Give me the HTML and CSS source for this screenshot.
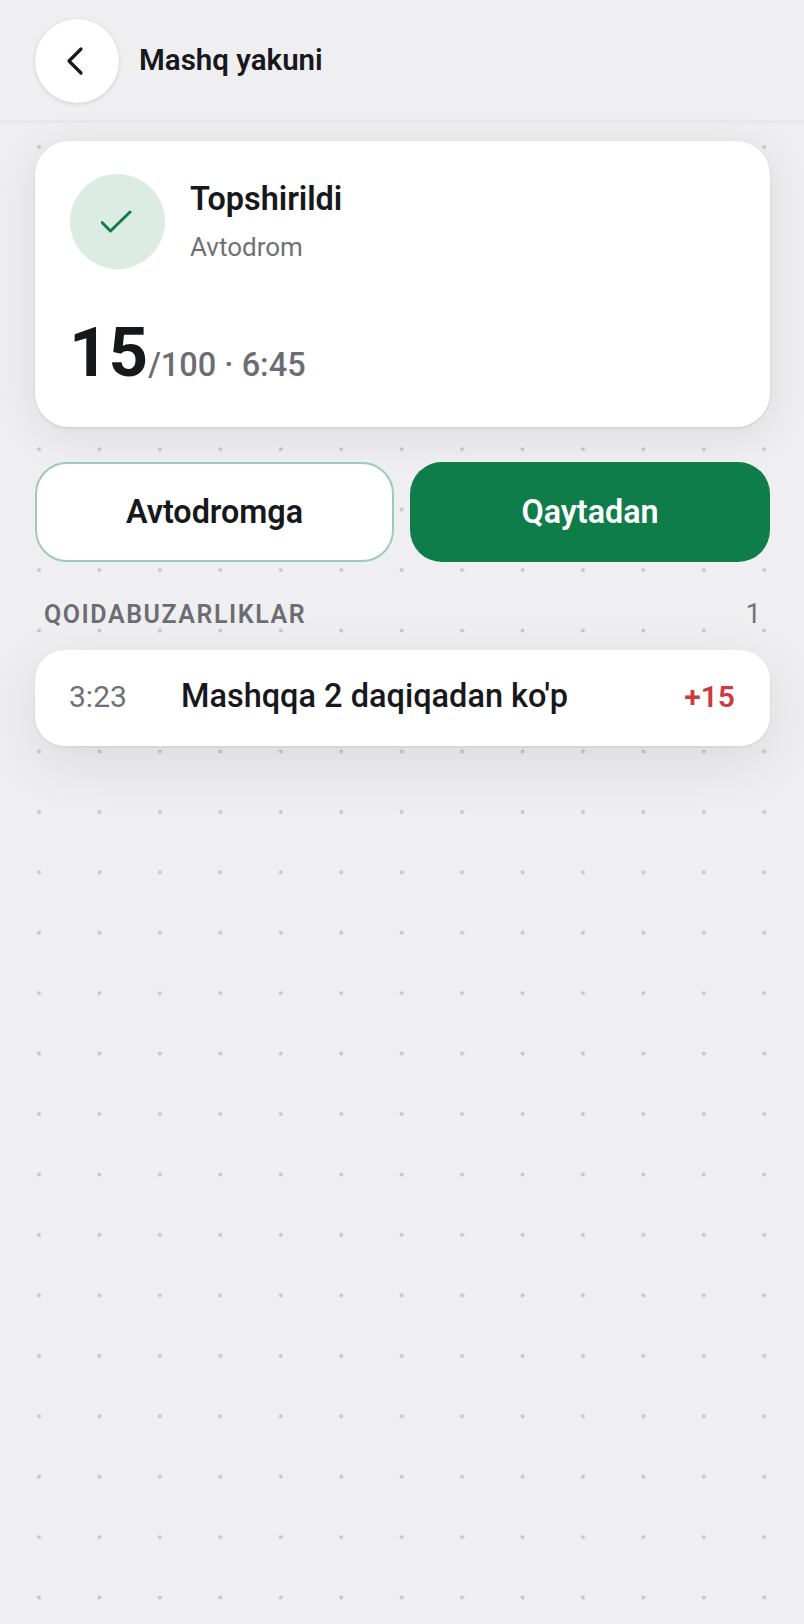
FILE: index.html
```html
<!DOCTYPE html>
<html lang="en">
<head>
    <meta charset="UTF-8">
    <meta name="viewport" content="width=device-width, initial-scale=1.0">
    <title>Mashq yakuni</title>
    <link rel="stylesheet" href="styles.css">
</head>
<body>

    <header class="top-bar">
        <button class="back-button" aria-label="Back">
            <svg width="20" height="30" viewBox="0 0 20 30" fill="none">
                <path d="M17 3 L5 15 L17 27" stroke="#17181b" stroke-width="3.2" stroke-linecap="round" stroke-linejoin="round"/>
            </svg>
        </button>
        <h1 class="top-title">Mashq yakuni</h1>
    </header>

    <main class="content">
        <section class="result-card">
            <div class="result-head">
                <div class="status-circle">
                    <svg width="34" height="26" viewBox="0 0 34 26" fill="none">
                        <path d="M1 13.5 L9.5 22 L29 3" stroke="#0f7d4a" stroke-width="3" stroke-linecap="round" stroke-linejoin="round"/>
                    </svg>
                </div>
                <div class="status-text">
                    <div class="status-title">Topshirildi</div>
                    <div class="status-sub">Avtodrom</div>
                </div>
            </div>
            <div class="score-line">
                <span class="score">15</span><span class="score-rest">/100 · 6:45</span>
            </div>
        </section>

        <div class="actions">
            <button class="action action-outline">Avtodromga</button>
            <button class="action action-solid">Qaytadan</button>
        </div>

        <div class="section-head">
            <span class="section-title">QOIDABUZARLIKLAR</span>
            <span class="section-count">1</span>
        </div>

        <div class="violation-row">
            <span class="violation-time">3:23</span>
            <span class="violation-name">Mashqqa 2 daqiqadan ko'p</span>
            <span class="violation-points">+15</span>
        </div>
    </main>

</body>
</html>
```

FILE: styles.css
```css
* {
    box-sizing: border-box;
}

html, body {
    height: 100%;
}

body {
    margin: 0;
    display: flex;
    flex-direction: column;
    background-color: #efeff2;
    color: #17181b;
    font-family: Roboto, "Liberation Sans", sans-serif;
}

.top-bar {
    display: flex;
    align-items: center;
    gap: 20px;
    height: 123px;
    padding: 2px 35px 0;
    background-color: #efeff2;
    border-bottom: 3px solid #e9e9ec;
}

.back-button {
    display: flex;
    align-items: center;
    justify-content: center;
    width: 84px;
    height: 84px;
    padding: 0 6px 0 0;
    background-color: #fff;
    border: none;
    border-radius: 50%;
    box-shadow: 0 1px 4px rgba(0, 0, 0, 0.14);
}

.top-title {
    margin: 0 0 2px;
    font-size: 29.5px;
    font-weight: 600;
}

.content {
    flex: 1;
    padding: 18px 34px 0 35px;
    background-image: radial-gradient(circle at center, #c6c7cc 0, #c6c7cc 1.4px, transparent 2.4px);
    background-size: 60.44px 60.44px;
    background-position: 8.8px -6.2px;
}

.result-card {
    height: 286px;
    padding: 33px 35px 0;
    background-color: #fff;
    border-radius: 34px;
    box-shadow: 0 8px 46px rgba(0, 0, 0, 0.09), 0 1px 3px rgba(0, 0, 0, 0.1);
}

.result-head {
    display: flex;
    gap: 25px;
}

.status-circle {
    display: flex;
    align-items: center;
    justify-content: center;
    width: 95px;
    height: 95px;
    background-color: #dcece4;
    border-radius: 50%;
}

.status-text {
    padding-top: 7px;
}

.status-title {
    font-size: 32.4px;
    font-weight: 600;
    line-height: 36px;
}

.status-sub {
    margin-top: 15px;
    font-size: 26px;
    line-height: 30px;
    color: #707176;
}

.score-line {
    margin: 42px 0 0 -1px;
    white-space: nowrap;
}

.score {
    font-size: 69px;
    font-weight: 700;
    line-height: 84px;
}

.score-rest {
    font-size: 32.5px;
    font-weight: 500;
    color: #6c6d73;
}

.actions {
    display: grid;
    grid-template-columns: 359px 360px;
    gap: 16px;
    margin-top: 35px;
}

.action {
    height: 100px;
    padding: 0;
    font-family: inherit;
    font-size: 32.3px;
    font-weight: 600;
    border-radius: 32px;
}

.action-outline {
    color: #17181b;
    background-color: #fff;
    border: 2px solid #9ccbb6;
}

.action-solid {
    color: #fff;
    background-color: #0f7d4a;
    border: none;
}

.section-head {
    display: flex;
    align-items: center;
    justify-content: space-between;
    height: 30px;
    margin-top: 37px;
    padding: 0 9px;
}

.section-title {
    font-size: 25px;
    font-weight: 600;
    letter-spacing: 1.55px;
    color: #6c6d73;
}

.section-count {
    font-size: 27px;
    color: #707176;
}

.violation-row {
    display: flex;
    align-items: center;
    height: 96px;
    margin-top: 21px;
    padding: 0 35px 4px 34px;
    background-color: #fff;
    border-radius: 30px;
    box-shadow: 0 16px 60px rgba(0, 0, 0, 0.09), 0 1px 3px rgba(0, 0, 0, 0.08);
}

.violation-time {
    width: 112px;
    font-size: 30px;
    color: #707176;
}

.violation-name {
    flex: 1;
    font-size: 32.5px;
    font-weight: 500;
}

.violation-points {
    font-size: 30px;
    font-weight: 600;
    color: #cf3a42;
}
```
